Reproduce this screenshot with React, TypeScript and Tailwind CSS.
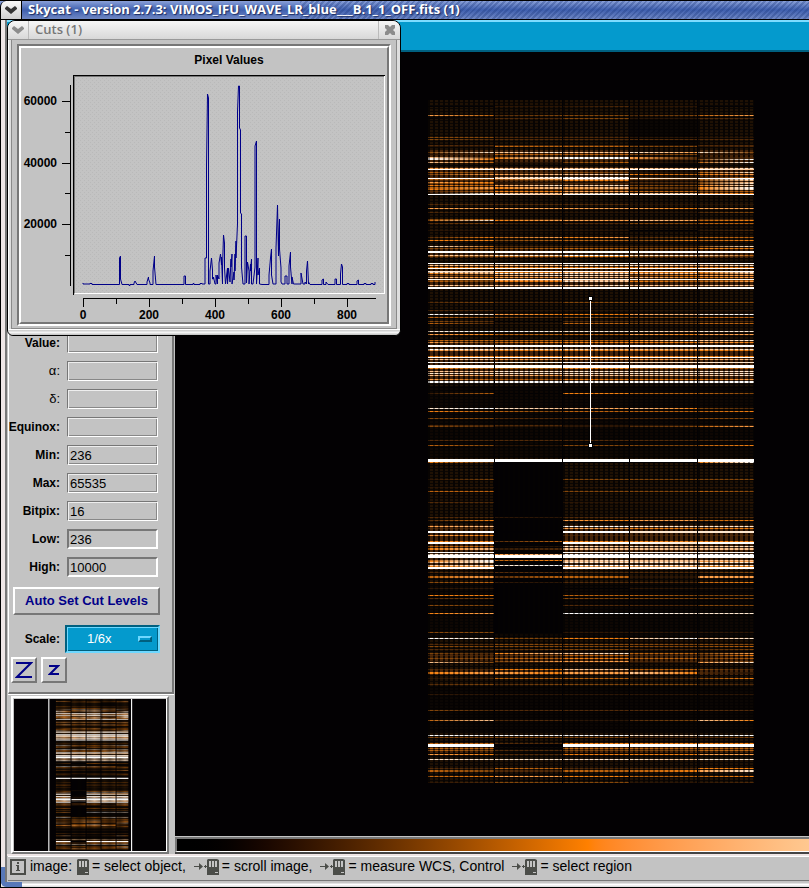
import React from "react";

type Line = [y: number, h: number, levels: string, solid?: boolean];

interface FieldProps {
  label: string;
  value?: string;
  editable?: boolean;
  greek?: boolean;
}

const LEVELS = [
  "#030103", "#2c1605", "#522a08", "#84460a", "#bd620c",
  "#f5800f", "#ffa048", "#ffc590", "#ffe8d0", "#ffffff",
];

// start and end of each of the five fibre blocks
const BLOCKS = [[0, 66], [67, 134], [135, 201], [202, 269], [270, 326]];

// crowded groups of lines that glow between the lines
const BANDS = [[50, 13], [67, 27], [149, 9], [163, 25], [240, 43], [425, 45], [553, 10], [570, 5], [645, 8]];

// two brightness levels per block: left edge and right edge
const LINES: Line[] = [
  [6, 1, "0011121100"], [15, 1, "6423332346"], [18, 1, "0122331122"],
  [37, 1, "3322221111"], [39, 1, "3222222222"], [45, 1, "2222221122"],
  [46, 1, "1144443312"], [52, 1, "3878778683"], [54, 1, "1244443311"],
  [57, 1, "7248996212"], [58, 1, "9458996212"], [59, 1, "9512222239"],
  [62, 1, "7411341149"], [68, 1, "6777777778"], [69, 1, "9999999997", true],
  [72, 1, "4322331148"], [74, 1, "3667785456"], [77, 1, "2279992114"],
  [78, 1, "9988998899", true], [79, 1, "4446773249"], [80, 1, "2223551137"],
  [82, 1, "6511112237"], [83, 1, "3412221138"], [85, 1, "5468783358"],
  [87, 2, "4657673259"], [89, 1, "5312331148"], [91, 1, "2455664434"],
  [93, 1, "1877787765"], [94, 1, "9997999999", true], [104, 1, "2222221111"],
  [108, 1, "6666666566"], [112, 1, "2111111123"], [119, 1, "3422111122"],
  [120, 1, "4856667645"], [123, 1, "2321223344"], [130, 1, "1111110012"],
  [137, 1, "2546562344"], [140, 1, "5534443545"], [146, 1, "8422222238"],
  [148, 1, "3434443455"], [151, 2, "9999999999", true], [155, 1, "7788998884"],
  [156, 1, "3344553332"], [163, 1, "9999999999", true], [165, 1, "7777888778"],
  [167, 1, "5555555555"], [168, 1, "9999999999", true], [171, 1, "8899999999", true],
  [172, 1, "8755665558"], [173, 1, "5788887747"], [175, 1, "3368873566"],
  [177, 1, "7566777556"], [179, 1, "9899999999", true], [180, 1, "3366773334"],
  [181, 1, "4355875446"], [185, 1, "7777787777"], [187, 2, "9999999999", true],
  [202, 1, "2322333333"], [210, 1, "2211111111"], [214, 1, "9865556789"],
  [217, 1, "4332333344"], [221, 1, "3200222222"], [223, 1, "4211443344"],
  [231, 1, "8998888788"], [234, 1, "6544446566"], [240, 1, "4444445978"],
  [242, 1, "6345555565"], [245, 2, "9999999999", true], [249, 1, "9888877778"],
  [250, 1, "6655555555"], [256, 1, "5555555555"], [257, 1, "9999999999", true],
  [259, 1, "7766666667"], [262, 1, "9999998888", true], [265, 3, "9999999999", true],
  [268, 1, "5444554444"], [271, 1, "7788888888"], [273, 1, "8888888888"],
  [275, 1, "7676777778"], [279, 1, "6444555556"], [281, 2, "9999999999"],
  [293, 1, "1400554443"], [308, 1, "8987767532"], [311, 1, "5443444445"],
  [318, 1, "3322222233"], [325, 1, "2222111111"], [326, 1, "3211112346"],
  [340, 1, "2222222222"], [345, 1, "4311333345"], [359, 3, "9999999999", true],
  [362, 1, "5200000059"], [379, 1, "1300333333"], [387, 1, "1100111111"],
  [391, 1, "4400333343"], [402, 1, "2200111111"], [417, 1, "2211222222"],
  [420, 1, "2500656645"], [426, 1, "6700998888"], [428, 1, "2200665555"],
  [431, 2, "9900998888", true], [435, 1, "6500222222"], [441, 1, "5524555555"],
  [442, 2, "9900999899", true], [446, 1, "4401878778"], [448, 2, "5712777777"],
  [452, 1, "9900999999", true], [454, 1, "8967999999"], [455, 3, "9999999999", true],
  [460, 1, "4945787777"], [461, 1, "5900777766"], [462, 1, "7800888888"],
  [465, 1, "7889999888"], [466, 1, "5600666655"], [467, 2, "9900999999", true],
  [472, 1, "2222222223"], [476, 2, "4624441166"], [482, 1, "3411222245"],
  [488, 1, "1100001111"], [495, 1, "5500444333"], [498, 1, "2300333333"],
  [505, 1, "3300222233"], [513, 1, "5600999888"], [532, 1, "3300111111"],
  [538, 1, "9833557978"], [544, 1, "2233333333"], [546, 1, "3333333334"],
  [549, 1, "2223332223"], [553, 1, "3257784436"], [555, 1, "2223442225"],
  [558, 1, "3344554434"], [561, 1, "1136662223"], [562, 1, "7311111168"],
  [569, 1, "2255774432"], [572, 2, "5665667521"], [578, 1, "1244442235"],
  [584, 1, "2323333322"], [594, 1, "1111111111"], [610, 1, "3222222222"],
  [620, 1, "4722112375"], [635, 1, "9999998899"], [637, 1, "3333332223"],
  [643, 1, "4422555555"], [644, 3, "9900999999", true], [648, 1, "4400444444"],
  [650, 1, "4322333344"], [654, 1, "6522555566"], [659, 1, "8888888788"],
  [668, 1, "2244222255"], [670, 2, "4322444568"], [676, 1, "4566554445"],
  [682, 1, "1233331112"],
];

interface SpectrumProps {
  id: string;
  // the small panner view is smoothed and needs wider gaps between blocks
  small?: boolean;
}

const Spectrum = ({ id, small = false }: SpectrumProps) => (
  <g shapeRendering={small ? "auto" : "crispEdges"}>
    <defs>
      <pattern id={`${id}-fibres`} width="5" height="3" patternUnits="userSpaceOnUse">
        <rect width="2" height="3" fill="#050200" opacity="0.42" />
      </pattern>
      <pattern id={`${id}-grain`} width="5" height="3" patternUnits="userSpaceOnUse">
        <rect width="5" height="3" fill="#0b0603" />
        <rect x="2" width="3" height="2" fill="#1f1104" />
      </pattern>
      <pattern id={`${id}-glow`} width="5" height="3" patternUnits="userSpaceOnUse">
        <rect width="5" height="3" fill="#190b02" />
        <rect x="2" width="3" height="3" fill="#452409" />
      </pattern>
      {LINES.map(([y, , levels]) => (
        <linearGradient key={y} id={`${id}-${y}`} gradientUnits="userSpaceOnUse" x1="0" x2="326" y1="0" y2="0">
          {BLOCKS.flatMap(([from, to], i) => [
            <stop key={`${i}a`} offset={from / 326} stopColor={LEVELS[Number(levels[i * 2])]} />,
            <stop key={`${i}b`} offset={to / 326} stopColor={LEVELS[Number(levels[i * 2 + 1])]} />,
          ])}
        </linearGradient>
      ))}
    </defs>
    <rect width="326" height="683" fill={`url(#${id}-grain)`} />
    <rect x="202" y="18" width="67" height="28" fill="#030103" opacity="0.7" />
    <rect y="286" width="326" height="72" fill="#030103" opacity="0.6" />
    <rect y="483" width="326" height="54" fill="#030103" opacity="0.6" />
    <rect y="586" width="326" height="46" fill="#030103" opacity="0.7" />
    {!small && BANDS.map(([y, h]) => (
      <rect key={y} y={y} width="326" height={h} fill={`url(#${id}-glow)`} />
    ))}
    <rect x="202" y="50" width="67" height="44" fill="#030103" opacity="0.6" />
    <rect x="65" y="363" width="70" height="170" fill="#030103" />
    <rect x="67" y="643" width="67" height="12" fill="#030103" opacity="0.8" />
    {LINES.filter((line) => !line[3]).map(([y, h]) => (
      <rect key={y} y={y} width="326" height={small ? h + 1 : h} fill={`url(#${id}-${y})`} />
    ))}
    <rect width="326" height="683" fill={`url(#${id}-fibres)`} />
    {LINES.filter((line) => line[3]).map(([y, h]) => (
      <rect key={y} y={y} width="326" height={small ? h + 2 : h} fill={`url(#${id}-${y})`} />
    ))}
    {[66, 134, 201, 269].map((x) => (
      <rect key={x} x={x} width={small ? 4 : 1} height="683" fill="#030103" />
    ))}
    <rect x="210" width="1" height="232" fill="#030103" />
  </g>
);

const Chevron = ({ color }: { color: string }) => (
  <svg width="12" height="8" viewBox="0 0 12 8">
    <path d="M0 2 L2 0 L6 3 L10 0 L12 2 L12 3 L6 8 L0 3Z" fill={color} />
  </svg>
);

const PLOT =
  "M83 283V284H90V283.5H92V284.5H119.5V258L120.5 256V279L122 284.5H129V285.5H130V284.5H134V283L135 281L137 284.5H147V282L148.5 277V279L150 283V284.5H153V271L154.5 256V267L156 284.5H184V276L185.5 276V284.5H193V283.5H194V284.5H200V283.5H202V284H205V258H206.5V166L207.5 94L208.5 98V284H210V271L211.5 258L212.5 270V279H213.5V277L215 284H216V275L217.5 284V275L219 279V263L220.5 254L221.5 265V257L222.5 284V268L223.5 235L224.5 243V268L225.5 284L227.5 268V284L228.5 268L230 282L231 259V267L232 254V284L234 272V280L235 254V271L236 241V258L237.5 224V112L238.5 86H239.5V128L240.5 130V213L241.5 214V267L243 284L245 284V236H246.5V283L247.5 262L249 271V284L250.5 264V271L251.5 259V284L253 284L255 267V146L256.5 141V284L258 258V275L259.5 268V284L262 284.5H269V275L270.5 258L271.5 249V275L273 284H276V248L277.5 205L278.5 256V239L279.5 219V249L281 268V282L282 284H285V276H287V284H289V266L290.5 252V267L292 284V277L293.5 284H301V273L303 284H305V282L306.5 284V271L307.5 261L308.5 284V282L310 284.5H322V280L323.5 279V284.5H326V282L328 284.5H335V279H336.5V284.5H340.5V274L341.5 264L342.5 267V284.5H347V283.5H349V284.5H357V281L358.5 280V284.5H364V283.5H366V284.5H371V283.5H373V284.5H375V282";

const CutsPlot = () => (
  <svg viewBox="21 48 366 274" className="block h-[274px] w-full bg-[#c3c3c3]">
    <defs>
      <pattern id="dither" width="4" height="4" patternUnits="userSpaceOnUse">
        <rect width="4" height="4" fill="#c3c3c3" />
        <path d="M0 0h1v1h-1zM2 2h1v1h-1z" fill="#b9b9b9" />
      </pattern>
    </defs>
    <g fontFamily="'Liberation Sans', Arial, sans-serif" fontSize="12" fontWeight="bold">
      <text x="229" y="64" textAnchor="middle">Pixel Values</text>
      {[60000, 40000, 20000].map((v, i) => (
        <text key={v} x="57" y={105 + Math.round(i * 61.5)} textAnchor="end">{v}</text>
      ))}
      {[0, 200, 400, 600, 800].map((v) => (
        <text key={v} x={83 + v * 0.33} y="319" textAnchor="middle">{v}</text>
      ))}
    </g>
    <rect x="74" y="76" width="310" height="218" fill="url(#dither)" />
    <g fill="none" stroke="#000" shapeRendering="crispEdges">
      <path d="M385 75.5H73.5V295" />
      <path d="M384 76.5H74.5V293" stroke="#777" />
      <path d="M75 293.5H384.5V76" stroke="#fff" />
      <path d="M70.5 85V286M62 101.5H70M65 132.5H70M62 163.5H70M65 193.5H70M62 224.5H70M65 255.5H70" />
      <path d="M83 298.5H376M83.5 298V307M116.5 298V304M149.5 298V307M182.5 298V304M215.5 298V307M248.5 298V304M281.5 298V307M314.5 298V304M347.5 298V307" />
    </g>
    <path d={PLOT} fill="none" stroke="#000088" strokeWidth="1" />
  </svg>
);

const CutsWindow = () => (
  <section className="absolute left-[7px] top-[20px] w-[394px] rounded-t-lg rounded-b-md border border-black bg-[#dedede] shadow-[inset_1px_1px_0_#fff]">
    <header className="flex h-[19px] items-center rounded-t-lg border-b border-[#999] bg-linear-to-b from-[#f6f6f6] to-[#d8d8d8] font-['Open_Sans',sans-serif] text-[13px] font-semibold text-[#777]">
      <button aria-label="Window menu" className="flex h-full w-[21px] items-center justify-center border-r border-[#bbb]">
        <Chevron color="#8c8c8c" />
      </button>
      <h2 className="flex-1 pl-[6px]">Cuts (1)</h2>
      <button aria-label="Close" className="flex h-full w-[22px] items-center justify-center border-l border-[#bbb]">
        <svg width="10" height="10" viewBox="0 0 10 10">
          <path d="M0 0H3L5 2L7 0H10V3L8 5L10 7V10H7L5 8L3 10H0V7L2 5L0 3Z" fill="#8c8c8c" />
        </svg>
      </button>
    </header>
    <div className="mx-[3px] border-x border-b border-[#8a8a8a] bg-[#c3c3c3] px-[5px] pt-[4px] pb-[2px]">
      <div className="border-2 border-t-[#777] border-l-[#777] border-r-white border-b-white">
        <div className="border-2 border-t-white border-l-white border-r-[#777] border-b-[#777]">
          <CutsPlot />
        </div>
      </div>
    </div>
    <div className="h-[6px] rounded-b-md border-t border-white bg-linear-to-b from-[#c8c8c8] via-[#f4f4f4] to-[#bdbdbd]" />
  </section>
);

const Field = ({ label, value = "", editable = false, greek = false }: FieldProps) => (
  <label className="flex h-[20px] items-center justify-end">
    <span className={greek ? "text-[13px] font-normal" : "font-bold"}>{label}</span>
    <input
      defaultValue={value}
      readOnly={!editable}
      className={
        editable
          ? "ml-[7px] h-[20px] w-[91px] border-2 border-t-[#777] border-l-[#777] border-r-white border-b-white px-px text-[13px]"
          : "ml-[7px] h-[20px] w-[91px] border border-[#777] border-r-white border-b-white px-[2px] text-[13px] shadow-[inset_1px_1px_0_#eee,inset_-1px_-1px_0_#888]"
      }
    />
  </label>
);

const ControlPanel = () => (
  <div className="flex flex-1 flex-col justify-end border-r-2 border-b-2 border-[#777] border-l border-l-white pb-[9px] text-[12px] shadow-[0_1px_0_#fff]">
    <div className="flex flex-col gap-[8px] pr-[14px]">
      <Field label="Value:" />
      <Field label="α:" greek />
      <Field label="δ:" greek />
      <Field label="Equinox:" />
      <Field label="Min:" value="236" />
      <Field label="Max:" value="65535" />
      <Field label="Bitpix:" value="16" />
      <Field label="Low:" value="236" editable />
      <Field label="High:" value="10000" editable />
    </div>
    <button className="mt-[10px] mr-[12px] ml-[4px] h-[28px] border-2 border-t-white border-l-white border-r-[#777] border-b-[#777] text-[13px] font-bold text-[#000088]">
      Auto Set Cut Levels
    </button>
    <div className="mt-[10px] flex items-center justify-end pr-[12px]">
      <label htmlFor="scale" className="font-bold">Scale:</label>
      <div className="relative ml-[5px]">
        <select
          id="scale"
          className="block h-[28px] w-[95px] appearance-none border-2 border-t-[#00607f] border-l-[#00607f] border-r-[#6ed8ff] border-b-[#6ed8ff] bg-[#049acd] pl-[20px] text-[13px] text-white shadow-[inset_1px_1px_0_#6ed8ff,inset_-1px_-1px_0_#00607f]"
        >
          <option>1/6x</option>
        </select>
        <span className="pointer-events-none absolute top-[11px] right-[8px] h-[6px] w-[14px] border-2 border-t-[#6ed8ff] border-l-[#6ed8ff] border-r-[#00607f] border-b-[#00607f]" />
      </div>
    </div>
    <div className="mt-[4px] ml-[2px] flex gap-[4px]">
      <button aria-label="Zoom in" className="flex size-[26px] items-center justify-center border-2 border-t-white border-l-white border-r-[#777] border-b-[#777]">
        <svg width="18" height="18" viewBox="0 0 18 18">
          <path d="M1 2H16L2 16H17" fill="none" stroke="#000088" strokeWidth="2" />
        </svg>
      </button>
      <button aria-label="Zoom out" className="flex size-[26px] items-center justify-center border-2 border-t-white border-l-white border-r-[#777] border-b-[#777]">
        <svg width="12" height="12" viewBox="0 0 12 12">
          <path d="M1 2H10L2 10H11" fill="none" stroke="#000088" strokeWidth="2" />
        </svg>
      </button>
    </div>
  </div>
);

const Panner = () => (
  <div className="mt-[2px] mr-[5px] ml-[3px] border-2 border-t-white border-l-white border-r-[#777] border-b-[#777]">
    <div className="border border-[#c3c3c3] border-r-white border-b-white bg-[#030103]">
      <svg viewBox="239 104 685 685" className="block w-full">
        <g transform="translate(428 100)">
          <Spectrum id="pan" small />
        </g>
        <path d="M396 104V790M769 104V790" stroke="#fff" strokeWidth="5" />
      </svg>
    </div>
  </div>
);

const ImageCanvas = () => (
  <svg className="block h-[784px] w-full bg-[#030103]">
    <g transform="translate(253 48)">
      <Spectrum id="main" />
    </g>
    <g fill="#fff" stroke="#000" shapeRendering="crispEdges">
      <path d="M415.5 248V392" stroke="#fff" />
      <rect x="413.5" y="244.5" width="4" height="4" />
      <rect x="413.5" y="391.5" width="4" height="4" />
    </g>
  </svg>
);

const MouseIcon = () => (
  <svg width="12" height="16" viewBox="0 0 12 16" className="mr-[3px] shrink-0">
    <path d="M1 0H10L12 1V16H0V1Z" fill="#4b4d49" />
    <path d="M2 2H4V8H2ZM5 2H7V8H5ZM8 2H10V8H8ZM8 13H11V14H8Z" fill="#c3c3c3" />
  </svg>
);

const ArrowIcon = () => (
  <svg width="13" height="9" viewBox="0 0 13 9" className="ml-[8px] shrink-0">
    <path d="M0 4H7V5H0ZM5 1L9 4.5L5 8ZM10 4H13V5H10ZM11 3H12V6H11Z" fill="#4b4d49" />
  </svg>
);

const StatusBar = () => (
  <footer className="mt-[2px] flex h-[25px] items-center overflow-hidden border-t border-b border-t-white border-b-[#777] pb-[4px] pl-[2px] text-[14px] whitespace-nowrap">
    <svg width="16" height="16" viewBox="0 0 16 16" className="mr-[4px] shrink-0">
      <rect x="1" y="1" width="14" height="14" fill="none" stroke="#4b4d49" strokeWidth="2" />
      <path d="M7 3H9V5H7ZM6 6H9V11H10V12H6V11H7V7H6Z" fill="#4b4d49" />
    </svg>
    <span className="mr-[5px]">image:</span>
    <MouseIcon />
    <span>= select object,</span>
    <ArrowIcon />
    <MouseIcon />
    <span>= scroll image,</span>
    <ArrowIcon />
    <MouseIcon />
    <span>= measure WCS, Control</span>
    <ArrowIcon />
    <MouseIcon />
    <span>= select region</span>
  </footer>
);

const App = () => {
  return (
    <main className="relative overflow-hidden bg-[#c3c3c3] font-['Liberation_Sans',Arial,sans-serif] text-black">
      <header className="relative flex h-[20px] items-center overflow-hidden border-y border-black bg-linear-to-b from-[#8aa0d8] via-[#3f5fae] to-[#7088c4] font-['Open_Sans',sans-serif] text-[13px] font-bold text-white">
        <div className="absolute inset-y-0 right-0 left-[300px] bg-[repeating-linear-gradient(135deg,#1f3b8055_0px,#1f3b8055_2px,transparent_2px,transparent_4px)]" />
        <button aria-label="Window menu" className="flex h-full w-[22px] items-center justify-center rounded-tl-md border-x border-black bg-linear-to-b from-[#f8f8f8] to-[#cfcfcf]">
          <Chevron color="#333" />
        </button>
        <h1 className="relative pl-[6px] whitespace-nowrap [text-shadow:1px_1px_1px_#1c2c60]">
          Skycat - version 2.7.3: VIMOS_IFU_WAVE_LR_blue___B.1_1_OFF.fits (1)
        </h1>
      </header>
      <div className="border-l border-black bg-[#eee6e6] pl-[4px]">
        <div className="border-l-2 border-[#777]">
          <nav aria-label="Menu" className="h-[32px] border-t-2 border-b-2 border-t-[#7ddcff] border-b-[#006080] bg-[#049acd]" />
          <div className="flex bg-[#c3c3c3] pl-px">
            <aside className="flex w-[166px] shrink-0 flex-col">
              <ControlPanel />
              <Panner />
            </aside>
            <div className="ml-px min-w-0 flex-1">
              <ImageCanvas />
              <div className="h-[18px] border-t border-b-2 border-t-[#c3c3c3] border-b-[#444]">
                <div className="h-[15px] border-t-2 border-b border-l-2 border-[#777] border-b-white bg-linear-to-r from-black via-[#ff8000] via-[65%] to-[#ffc890]" />
              </div>
            </div>
          </div>
          <div className="bg-[#c3c3c3] pt-0 pb-px pl-px">
            <StatusBar />
          </div>
        </div>
      </div>
      <div className="flex h-[6px] border-b border-l border-black bg-linear-to-b from-[#b8b8b8] via-white to-[#d8d8d8]">
        <div className="w-[21px] rounded-bl-md bg-[#5878b8]" />
      </div>
      <div className="absolute bottom-[5px] left-px h-[16px] w-[4px] bg-[#5878b8]" />
      <CutsWindow />
    </main>
  );
};

export default App;
